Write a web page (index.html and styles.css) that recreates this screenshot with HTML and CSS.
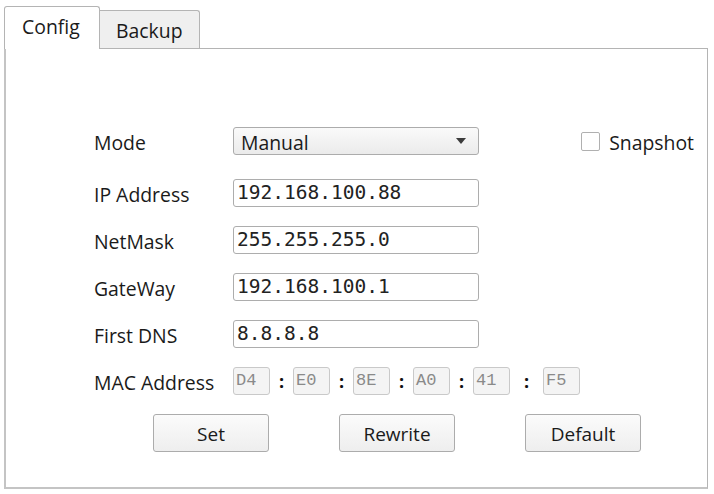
FILE: index.html
```html
<!DOCTYPE html>
<html>
<head>
<meta charset="utf-8">
<link rel="stylesheet" href="styles.css">
</head>
<body>
<div class="window">
  <div class="tabs">
    <div class="tab active">Config</div>
    <div class="tab">Backup</div>
  </div>
  <div class="panel">
    <div class="row mode-row">
      <span class="label">Mode</span>
      <div class="select"><span>Manual</span><span class="arrow"></span></div>
      <label class="check"><span class="box"></span><span>Snapshot</span></label>
    </div>
    <div class="row first">
      <span class="label">IP Address</span>
      <div class="input">192.168.100.88</div>
    </div>
    <div class="row">
      <span class="label">NetMask</span>
      <div class="input">255.255.255.0</div>
    </div>
    <div class="row">
      <span class="label">GateWay</span>
      <div class="input">192.168.100.1</div>
    </div>
    <div class="row">
      <span class="label">First DNS</span>
      <div class="input">8.8.8.8</div>
    </div>
    <div class="row">
      <span class="label">MAC Address</span>
      <div class="mac">
        <span class="oct">D4</span><span class="colon">:</span>
        <span class="oct">E0</span><span class="colon">:</span>
        <span class="oct">8E</span><span class="colon">:</span>
        <span class="oct">A0</span><span class="colon">:</span>
        <span class="oct">41</span><span class="colon wide">:</span>
        <span class="oct">F5</span>
      </div>
    </div>
    <div class="buttons">
      <button class="btn">Set</button>
      <button class="btn">Rewrite</button>
      <button class="btn">Default</button>
    </div>
  </div>
</div>
</body>
</html>
```

FILE: styles.css
```css
html, body {
  margin: 0;
  padding: 0;
  background: #ffffff;
}
body {
  font-family: "Open Sans", "Liberation Sans", sans-serif;
  font-size: 19.4px;
  color: #1a1a1a;
  width: 714px;
  height: 494px;
  overflow: hidden;
}
.window {
  padding: 6px 0 0 4px;
}
.tabs {
  display: flex;
  align-items: flex-end;
  height: 42px;
  position: relative;
  z-index: 1;
}
.tab {
  box-sizing: border-box;
  height: 38px;
  width: 100px;
  background: #efefef;
  border: 1px solid #b4b4b4;
  border-left: none;
  border-bottom: none;
  border-radius: 0 3px 0 0;
  padding: 8px 0 0 16px;
  line-height: 24px;
}
.tab.active {
  height: 43px;
  width: 96px;
  margin-bottom: -1px;
  background: #ffffff;
  border-left: 1px solid #b4b4b4;
  border-radius: 3px 3px 0 0;
  padding: 8px 0 0 17px;
}
.panel {
  box-sizing: border-box;
  width: 704px;
  height: 441px;
  border: 1px solid #b4b4b4;
  border-left: 2px solid #c4c4c4;
  border-bottom: 2px solid #c4c4c4;
  background: #ffffff;
  padding: 78px 13px 0 88px;
  display: flex;
  flex-direction: column;
  gap: 19px;
}
.row {
  display: flex;
  align-items: center;
  height: 28px;
}
.row.first {
  margin-top: 5px;
}
.label {
  width: 139px;
  flex: none;
  line-height: 28px;
  padding-top: 3px;
  box-sizing: border-box;
}
.select {
  box-sizing: border-box;
  width: 246px;
  height: 28px;
  border: 1px solid #acacac;
  border-radius: 3px;
  background: linear-gradient(#fafafa, #ebebeb);
  display: flex;
  align-items: center;
  justify-content: space-between;
  padding: 2px 12px 0 7px;
}
.arrow {
  width: 0;
  height: 0;
  border-left: 5px solid transparent;
  border-right: 5px solid transparent;
  border-top: 6px solid #3c3c3c;
  margin-top: -2px;
}
.check {
  margin-left: auto;
  display: flex;
  align-items: center;
  gap: 9px;
}
.check .box {
  box-sizing: border-box;
  width: 19px;
  height: 19px;
  border: 1px solid #b0b0b0;
  border-radius: 2px;
  background: #ffffff;
}
.check span:last-child {
  padding-top: 3px;
}
.input {
  box-sizing: border-box;
  width: 246px;
  height: 28px;
  border: 1px solid #adadad;
  border-radius: 3px;
  background: #ffffff;
  font-family: "DejaVu Sans Mono", "Liberation Mono", monospace;
  font-size: 19.5px;
  line-height: 26px;
  padding-left: 3px;
  color: #222222;
}
.mac {
  display: flex;
  align-items: center;
}
.oct {
  box-sizing: border-box;
  width: 37px;
  height: 28px;
  border: 1px solid #c9c9c9;
  border-radius: 3px;
  background: #f4f4f4;
  color: #8a8a8a;
  font-family: "Liberation Mono", "DejaVu Sans Mono", monospace;
  font-size: 17px;
  line-height: 26px;
  padding-left: 2px;
}
.colon {
  width: 23px;
  text-align: center;
  font-weight: bold;
  font-size: 18px;
  color: #111111;
  line-height: 26px;
}
.colon.wide {
  width: 33px;
}
.buttons {
  display: flex;
  gap: 70px;
  padding-left: 59px;
}
.btn {
  box-sizing: border-box;
  width: 116px;
  height: 38px;
  border: 1px solid #acacac;
  border-radius: 3px;
  background: linear-gradient(#fbfbfb, #eeeeee);
  font-family: "Open Sans", "Liberation Sans", sans-serif;
  font-size: 19px;
  color: #1a1a1a;
  padding: 2px 0 0 0;
}
```
